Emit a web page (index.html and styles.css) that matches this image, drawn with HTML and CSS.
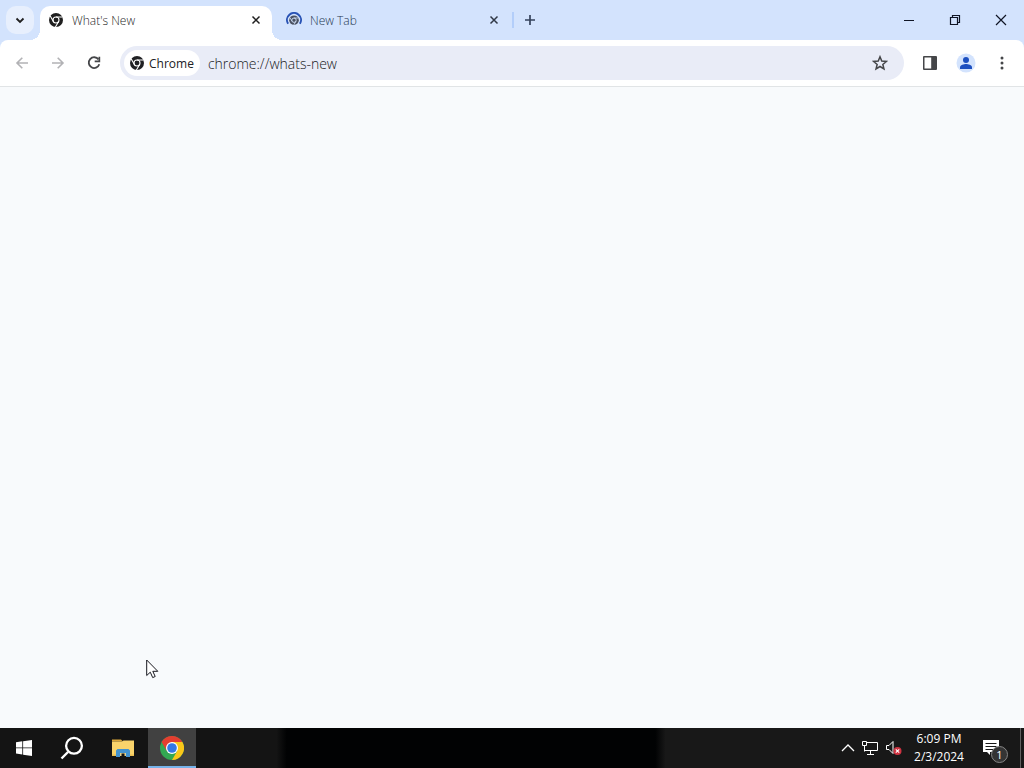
FILE: index.html
```html
<!DOCTYPE html>
<html lang="en">
<head>
<meta charset="utf-8">
<title>What's New</title>
<link rel="stylesheet" href="styles.css">
</head>
<body>
<svg class="defs" aria-hidden="true">
  <symbol id="chrome-mono" viewBox="0 0 16 16">
    <circle cx="8" cy="8" r="7" fill="currentColor"/>
    <g fill="none" stroke="#fff" stroke-width="1.1">
      <circle cx="8" cy="8" r="3"/>
      <path d="M8 5h6.6M5.4 9.5 2.1 3.8M10.6 9.5 7.3 15.2"/>
    </g>
  </symbol>
  <symbol id="close" viewBox="0 0 16 16">
    <path d="m4.5 4.5 7 7m0-7-7 7" fill="none" stroke="currentColor" stroke-width="1.5"/>
  </symbol>
</svg>
<div class="desktop">
  <header class="tabstrip">
    <button class="tab-search" aria-label="Search tabs"><svg width="16" height="16" viewBox="0 0 16 16"><path d="m4.5 6.5 3.5 3.5 3.5-3.5" fill="none" stroke="currentColor" stroke-width="1.8"/></svg></button>
    <div class="tab tab-active">
      <svg class="favicon" width="16" height="16"><use href="#chrome-mono"/></svg>
      <span class="tab-title">What's New</span>
      <button class="tab-close" aria-label="Close What's New"><svg width="16" height="16"><use href="#close"/></svg></button>
    </div>
    <div class="tab">
      <svg class="favicon" width="16" height="16" viewBox="0 0 16 16" fill="none">
        <path d="M2.1 11.7A7 7 0 1 1 13.9 11.7" stroke="#2953b5" stroke-width="2"/>
        <circle cx="8" cy="8.2" r="4.8" fill="#4b5262"/>
        <circle cx="8" cy="8.2" r="2.2" stroke="#d3e3fd" stroke-width=".9"/>
        <path d="M8 6h4.3M6.1 9.3 4 5.7m5.9 3.6-2.1 3.6" stroke="#d3e3fd" stroke-width=".8"/>
      </svg>
      <span class="tab-title">New Tab</span>
      <button class="tab-close" aria-label="Close New Tab"><svg width="16" height="16"><use href="#close"/></svg></button>
    </div>
    <span class="separator"></span>
    <button class="new-tab" aria-label="New tab"><svg width="16" height="16" viewBox="0 0 16 16"><path d="M8 3v10M3 8h10" fill="none" stroke="currentColor" stroke-width="1.7"/></svg></button>
    <div class="window-controls">
      <button aria-label="Minimize"><svg width="12" height="12" viewBox="0 0 12 12"><path d="M1 6.5h10" stroke="currentColor"/></svg></button>
      <button aria-label="Restore"><svg width="12" height="12" viewBox="0 0 12 12"><path d="M1.5 3.5h7v7h-7zM3.5 3.5v-2h7v7h-2" fill="none" stroke="currentColor" stroke-width="1.2"/></svg></button>
      <button aria-label="Close"><svg width="12" height="12" viewBox="0 0 12 12"><path d="m1 1 10 10m0-10L1 11" stroke="currentColor" stroke-width="1.2"/></svg></button>
    </div>
  </header>
  <nav class="toolbar" aria-label="Navigation">
    <button class="nav-button" aria-label="Back" disabled><svg width="16" height="16" viewBox="0 0 16 16"><path d="M14 8H3m5.3-5.3L3 8l5.3 5.3" fill="none" stroke="currentColor" stroke-width="1.6"/></svg></button>
    <button class="nav-button" aria-label="Forward" disabled><svg width="16" height="16" viewBox="0 0 16 16"><path d="M2 8h11M7.7 2.7 13 8l-5.3 5.3" fill="none" stroke="currentColor" stroke-width="1.6"/></svg></button>
    <button class="nav-button" aria-label="Reload"><svg width="16" height="16" viewBox="0 0 16 16"><path d="M12.5 4.4A5.4 5.4 0 1 0 13.3 9.3" fill="none" stroke="currentColor" stroke-width="1.8"/><path d="M14.2 1.7v5.5H8.7V5.5h3.8V1.7z" fill="currentColor"/></svg></button>
    <div class="omnibox">
      <button class="chip"><svg width="16" height="16"><use href="#chrome-mono"/></svg>Chrome</button>
      <input class="address" type="text" aria-label="Address" value="chrome://whats-new" spellcheck="false">
      <button class="star" aria-label="Bookmark this tab"><svg width="16" height="16" viewBox="0 0 16 16"><path d="m8 1.8 1.75 4.3 4.6.35-3.5 3 1.1 4.5L8 11.5l-3.95 2.45 1.1-4.5-3.5-3 4.6-.35z" fill="none" stroke="currentColor" stroke-width="1.5"/></svg></button>
    </div>
    <div class="actions">
      <button aria-label="Side panel"><svg width="16" height="16" viewBox="0 0 16 16"><path d="M2 1h12q1 0 1 1v12q0 1-1 1H2q-1 0-1-1V2q0-1 1-1zm.5 1.6v10.8h6.7V2.6z" fill="currentColor" fill-rule="evenodd"/></svg></button>
      <button aria-label="Profile"><svg width="20" height="20" viewBox="0 0 20 20"><circle cx="10" cy="10" r="9.5" fill="#d3e3fd"/><circle cx="10" cy="6.9" r="3" fill="#1c4fc0"/><path d="M4 16v-1.6C4 12 8 11 10 11s6 1 6 3.4V16z" fill="#1c4fc0"/></svg></button>
      <button aria-label="Menu"><svg width="16" height="16" viewBox="0 0 16 16" fill="currentColor"><circle cx="8" cy="2.9" r="1.5"/><circle cx="8" cy="8" r="1.5"/><circle cx="8" cy="13.1" r="1.5"/></svg></button>
    </div>
  </nav>
  <main class="page"></main>
  <footer class="taskbar">
    <button class="task" aria-label="Start"><svg width="16" height="16" viewBox="0 0 16 16"><path d="M0 2.2 6.3 1.3v6.2H0zM7.1 1.2 16 0v7.5H7.1zM0 8.3h6.3v6.2L0 13.6zM7.1 8.3H16v7.6l-8.9-1.2z" fill="#fff"/></svg></button>
    <button class="task" aria-label="Search"><svg width="24" height="24" viewBox="0 0 24 24"><path d="M1.5 22.5 8 16" stroke="#fff" stroke-width="2.4"/><circle cx="14" cy="9.8" r="7.9" fill="none" stroke="#fff" stroke-width="2.3"/></svg></button>
    <button class="task task-files" aria-label="File Explorer"><svg width="22" height="20" viewBox="0 0 22 20"><path d="M0 1.5h9l2 2H0z" fill="#dca73a"/><path d="M0 3.5h10l1.5-1H22V18H0z" fill="#f9d36b"/><path d="M4 19v-6.5L5.5 11h11l1.5 1.5V19h-4v-4H8v4z" fill="#4393cf"/><path d="M8 15h6v3H8z" fill="#e9d28a"/><path d="M9.5 15.5h3V19h-3z" fill="#141414"/><path d="M0 16.5h4V18H0zm18 0h4V18h-4z" fill="#e9bd50"/></svg></button>
    <button class="task task-active" aria-label="Google Chrome"><svg width="24" height="24" viewBox="0 0 24 24"><circle cx="12" cy="12" r="12" fill="#33a852"/><path d="M1.6 6A12 12 0 0 1 22.4 6H12L6.8 15z" fill="#e43e30"/><path d="M22.4 6A12 12 0 0 1 12 24l5.2-9L12 6z" fill="#fbc719"/><circle cx="12" cy="12" r="6" fill="#fff"/><circle cx="12" cy="12" r="4.8" fill="#3478e5"/></svg></button>
    <div class="tray">
      <button aria-label="Show hidden icons"><svg width="14" height="16" viewBox="0 0 14 16"><path d="m1 11 6-6 6 6" fill="none" stroke="#fff" stroke-width="1.3"/></svg></button>
      <button aria-label="Network"><svg width="18" height="16" viewBox="0 0 18 16" fill="none" stroke="#fff"><path d="M5.5 2.5h11v8h-13V7M9.5 10.5v4M6 14.5h7"/><path d="M1.5 1.5h4v4h-4zM3.5 5.5v6"/></svg></button>
      <button aria-label="Volume muted"><svg width="18" height="16" viewBox="0 0 18 16"><path d="M1.5 5.5H4l4-4v12l-4-4H1.5z" fill="none" stroke="#fff"/><circle cx="12.5" cy="11" r="4" fill="#cf3341"/><path d="m10.8 9.3 3.4 3.4m0-3.4-3.4 3.4" stroke="#fff" stroke-width="1.1"/></svg></button>
      <button class="clock"><time>6:09 PM</time><time>2/3/2024</time></button>
      <button class="notices" aria-label="Notifications"><svg width="16" height="18" viewBox="0 0 16 18"><path d="M0 1h16v12H7v3l-3-3H0z" fill="#fff"/><path d="M2.5 4.5h11m-11 3h11m-11 3h8" stroke="#181818"/></svg><span class="badge">1</span></button>
    </div>
  </footer>
</div>
<svg class="cursor" width="13" height="20" viewBox="0 0 13 20" aria-hidden="true"><path d="M.7 1v15.5l3.6-3.3 2.4 5.4 2.5-1.1-2.4-5.2h5z" fill="#fff" stroke="#17171f"/></svg>
</body>
</html>
```
FILE: styles.css
```css
* { box-sizing: border-box; }
body { margin: 0; font-family: "Open Sans", "Noto Sans", sans-serif; font-size: 12px; color: #1f1f1f; }
button { display: flex; align-items: center; justify-content: center; padding: 0; border: 0; background: none; color: inherit; font: inherit; }
svg { display: block; flex: none; }
.defs { position: absolute; width: 0; height: 0; }
.desktop { display: flex; flex-direction: column; min-height: 100vh; }

.tabstrip { display: flex; align-items: center; height: 40px; padding-left: 6px; background: #d3e3fd; }
.tab-search { width: 28px; height: 28px; margin-right: 6px; border-radius: 10px; background: #e7effd; }
.tab { display: flex; align-items: center; gap: 8px; flex: 0 1 240px; height: 34px; align-self: flex-end; padding: 0 10px 6px 14px; color: #263650; font-weight: 300; }
.tab-active { position: relative; flex-basis: 232px; padding: 0 8px 6px; border-radius: 10px 10px 0 0; background: #fff; color: #1f1f1f; }
.tab-active::before, .tab-active::after { content: ""; position: absolute; bottom: 0; width: 10px; height: 10px; }
.tab-active::before { right: 100%; background: radial-gradient(circle at 0 0, transparent 10px, #fff 10px); }
.tab-active::after { left: 100%; background: radial-gradient(circle at 100% 0, transparent 10px, #fff 10px); }
.tab-title { flex: 1; }
.tab-close { width: 16px; height: 16px; color: #303846; }
.tab-active .tab-close { color: #1f1f1f; }
.separator { width: 2px; height: 16px; background: #b3cefa; }
.new-tab { width: 28px; height: 28px; margin-left: 2px; color: #35435c; }
.window-controls { display: flex; margin-left: auto; color: #101525; }
.window-controls button { width: 46px; height: 40px; }

.toolbar { display: flex; align-items: center; height: 47px; padding: 0 8px; border-bottom: 1px solid #e1e4e6; background: linear-gradient(#d3e3fd, #d3e3fd) top / 100% 10px no-repeat; position: relative; isolation: isolate; color: #454649; }
.toolbar::before { content: ""; position: absolute; z-index: -1; inset: 0; border-radius: 8px 8px 0 0; background: #fff; }
.nav-button { width: 28px; height: 28px; margin-right: 8px; }
.nav-button:disabled { color: #b2b2b5; }
.omnibox { display: flex; align-items: center; flex: 1; min-width: 0; height: 34px; margin-left: 4px; padding: 0 16px 0 4px; border-radius: 17px; background: #e9ecf7; }
.chip { gap: 4px; height: 26px; padding: 0 6px 0 5px; border-radius: 13px; background: #fff; color: #202124; }
.address { flex: 1; min-width: 0; margin: 0 8px; padding: 0; border: 0; outline: 0; background: none; color: #202124; font: 300 14px "Open Sans", "Noto Sans", sans-serif; }
.actions { display: flex; gap: 8px; margin-left: 12px; }
.actions button { width: 28px; height: 28px; }

.page { flex: 1; background: #f8fafc; }

.taskbar { display: flex; height: 40px; background: linear-gradient(90deg, #141414 27%, #010203 28%, #010203 64%, #181818 65%); color: #fff; }
.task { width: 48px; height: 40px; }
.task-files { width: 52px; padding-left: 2px; }
.task-active { border-bottom: 2px solid #76b3ea; background: #414141; }
.task-active svg { margin-top: 2px; }
.tray { display: flex; align-items: center; gap: 6px; margin-left: auto; padding-right: 3px; }
.clock { flex-direction: column; width: 60px; line-height: 18px; }
.notices { position: relative; justify-content: flex-start; width: 46px; height: 40px; padding-left: 8px; border-right: 1px solid #606060; }
.badge { position: absolute; right: 12px; bottom: 5px; width: 17px; height: 17px; border: 1px solid #858585; border-radius: 50%; background: #343434; font-size: 11px; line-height: 15px; }
.cursor { position: absolute; left: 146px; top: 659px; }
```
